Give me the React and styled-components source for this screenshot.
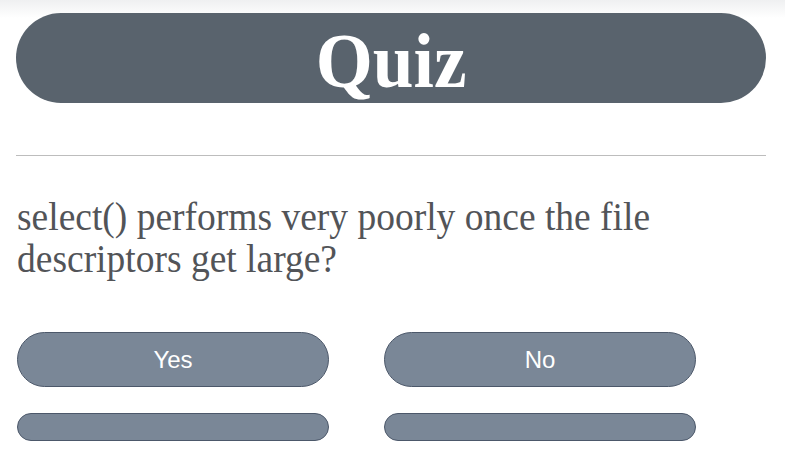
import { createGlobalStyle, styled } from "styled-components";

const GlobalStyle = createGlobalStyle`
  html, body {
    margin: 0;
    padding: 0;
    background: linear-gradient(#eff0f1 0px, #ffffff 18px) no-repeat, #ffffff;
  }
  body {
    font-family: "Liberation Serif", "Times New Roman", serif;
  }
`;

const Page = styled.main`
  width: 750px;
  padding: 13px 0 0 16px;
`;

const Header = styled.header`
  display: flex;
  align-items: center;
  justify-content: center;
  height: 90px;
  border-radius: 45px;
  background-color: #59636d;
`;

const Title = styled.h1`
  margin: 0;
  font-family: "Liberation Serif", "Times New Roman", serif;
  font-size: 78px;
  font-weight: bold;
  color: #ffffff;
  line-height: 1;
  transform: translate(0px, 3px) scaleX(0.94);
`;

const Divider = styled.hr`
  margin: 52px 0 0;
  border: none;
  border-top: 1px solid #bdbdbd;
`;

const Question = styled.p`
  margin: 40px 0 0 1px;
  font-size: 37.5px;
  line-height: 40px;
  color: #525458;
  transform-origin: left top;
  transform: scaleY(1.06);
`;

const Answers = styled.div`
  display: grid;
  grid-template-columns: 312px 312px;
  column-gap: 55px;
  row-gap: 26px;
  margin-top: 56px;
  padding-left: 1px;
`;

const AnswerButton = styled.button`
  height: ${(p) => (p.$slim ? "28px" : "55px")};
  border: 1px solid #4c586a;
  border-radius: 28px;
  background-color: #7a8797;
  color: #ffffff;
  font-family: "Liberation Sans", Arial, sans-serif;
  font-size: 24px;
  padding: 0;
  cursor: pointer;
`;

export default function App() {
  return (
    <>
      <GlobalStyle />
      <Page>
        <Header>
          <Title>Quiz</Title>
        </Header>
        <Divider />
        <Question>
          select() performs very poorly once the file
          <br />
          descriptors get large?
        </Question>
        <Answers>
          <AnswerButton>Yes</AnswerButton>
          <AnswerButton>No</AnswerButton>
          <AnswerButton $slim />
          <AnswerButton $slim />
        </Answers>
      </Page>
    </>
  );
}
